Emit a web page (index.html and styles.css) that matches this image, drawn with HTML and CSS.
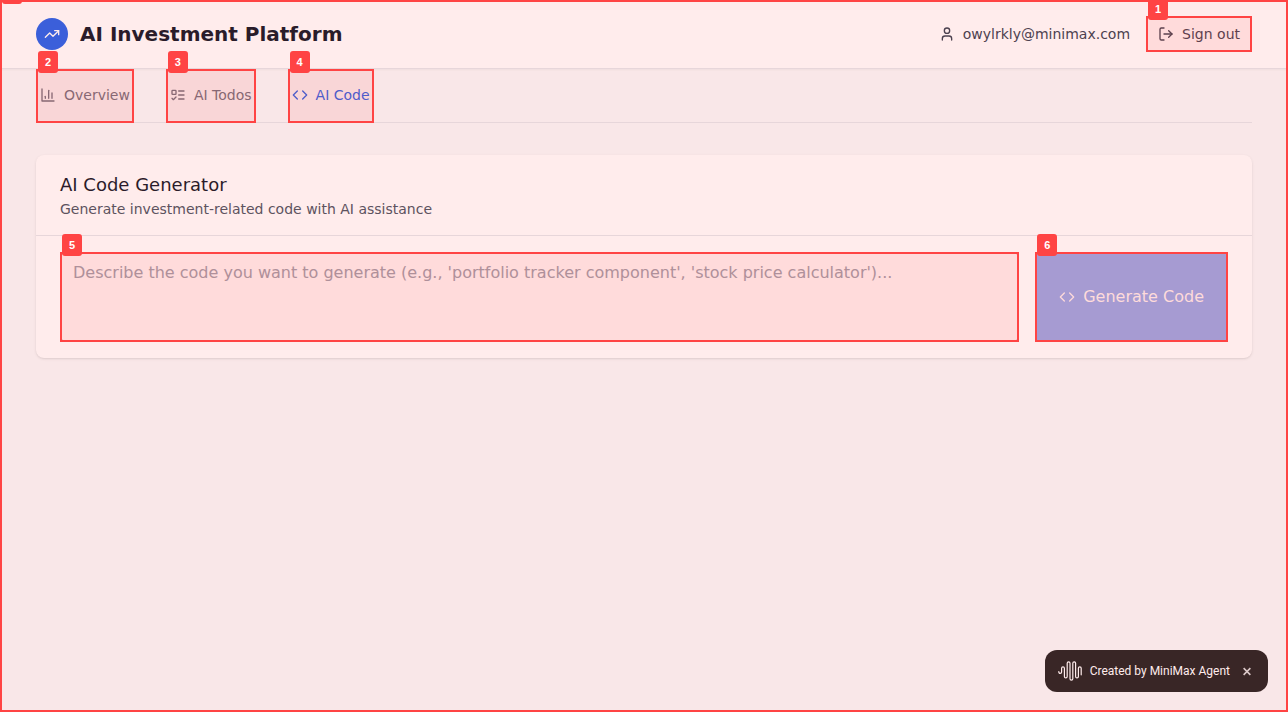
FILE: index.html
```html
<!DOCTYPE html>
<html lang="en">
<head>
<meta charset="utf-8">
<meta name="viewport" content="width=device-width, initial-scale=1">
<title>AI Investment Platform</title>
<link rel="stylesheet" href="styles.css">
</head>
<body>
<header class="topbar">
  <div class="container topbar-row">
    <div class="brand">
      <span class="brand-mark"><svg class="icon" viewBox="0 0 24 24"><path d="M22 7 13.5 15.5 8.5 10.5 2 17"/><path d="M16 7h6v6"/></svg></span>
      <h1 class="brand-name">AI Investment Platform</h1>
    </div>
    <div class="account">
      <div class="user">
        <svg class="icon" viewBox="0 0 24 24"><path d="M19 21v-2a4 4 0 0 0-4-4H9a4 4 0 0 0-4 4v2"/><circle cx="12" cy="7" r="4"/></svg>
        <span>owylrkly@minimax.com</span>
      </div>
      <div class="target">
        <button class="signout" type="button">
          <svg class="icon" viewBox="0 0 24 24"><path d="M9 21H5a2 2 0 0 1-2-2V5a2 2 0 0 1 2-2h4"/><path d="m16 17 5-5-5-5"/><path d="M21 12H9"/></svg>
          Sign out
        </button>
        <div class="marker"><span class="marker-label">1</span></div>
      </div>
    </div>
  </div>
</header>

<main class="container">
  <nav class="tabs">
    <div class="target">
      <button class="tab" type="button">
        <svg class="icon" viewBox="0 0 24 24"><path d="M3 3v18h18"/><path d="M18 17V9"/><path d="M13 17V5"/><path d="M8 17v-3"/></svg>
        Overview
      </button>
      <div class="marker"><span class="marker-label">2</span></div>
    </div>
    <div class="target">
      <button class="tab" type="button">
        <svg class="icon" viewBox="0 0 24 24"><rect x="3" y="5" width="6" height="6" rx="1"/><path d="m3 17 2 2 4-4"/><path d="M13 6h8"/><path d="M13 12h8"/><path d="M13 18h8"/></svg>
        AI Todos
      </button>
      <div class="marker"><span class="marker-label">3</span></div>
    </div>
    <div class="target">
      <button class="tab tab-active" type="button">
        <svg class="icon" viewBox="0 0 24 24"><path d="m16 18 6-6-6-6"/><path d="m8 6-6 6 6 6"/></svg>
        AI Code
      </button>
      <div class="marker"><span class="marker-label">4</span></div>
    </div>
  </nav>

  <section class="card">
    <div class="card-head">
      <h2 class="card-title">AI Code Generator</h2>
      <p class="card-subtitle">Generate investment-related code with AI assistance</p>
    </div>
    <form class="card-body">
      <div class="target target-grow">
        <textarea class="prompt" rows="3" aria-label="Code description" placeholder="Describe the code you want to generate (e.g., 'portfolio tracker component', 'stock price calculator')..."></textarea>
        <div class="marker"><span class="marker-label">5</span></div>
      </div>
      <div class="target">
        <button class="generate" type="submit" disabled>
          <svg class="icon" viewBox="0 0 24 24"><path d="m16 18 6-6-6-6"/><path d="m8 6-6 6 6 6"/></svg>
          Generate Code
        </button>
        <div class="marker"><span class="marker-label">6</span></div>
      </div>
    </form>
  </section>
</main>

<aside class="credit">
  <svg class="credit-logo" viewBox="0 0 24 20"><path d="M.8 10.5v.5a1.4 1.4 0 0 0 2.8 0V7.2a1.4 1.4 0 0 1 2.8 0v8.4a1.4 1.4 0 0 0 2.8 0V2.2a1.4 1.4 0 0 1 2.8 0v15.6a1.4 1.4 0 0 0 2.8 0V2.2a1.4 1.4 0 0 1 2.8 0v13.4a1.4 1.4 0 0 0 2.8 0V7.2a1.4 1.4 0 0 1 2.8 0v6.6"/></svg>
  <span>Created by MiniMax Agent</span>
  <button class="credit-close" type="button" aria-label="Close"><svg viewBox="0 0 8 8"><path d="M1 1l6 6M7 1 1 7"/></svg></button>
</aside>

<div class="marker marker-page"><span class="marker-label"></span></div>
</body>
</html>
```
FILE: styles.css
```css
*,
*::before,
*::after {
  box-sizing: border-box;
}

body {
  margin: 0;
  min-height: 100vh;
  background: #f9fafb;
  color: #111827;
  font-family: "DejaVu Sans", sans-serif;
  font-size: 16px;
  line-height: 24px;
}

h1,
h2,
p {
  margin: 0;
}

button {
  display: flex;
  align-items: center;
  gap: 8px;
  margin: 0;
  border: 0;
  background: transparent;
  font: inherit;
  white-space: nowrap;
}

.container {
  max-width: 1280px;
  margin: 0 auto;
  padding: 0 32px;
}

.icon {
  flex: none;
  width: 16px;
  height: 16px;
  fill: none;
  stroke: currentColor;
  stroke-width: 2;
  stroke-linecap: round;
  stroke-linejoin: round;
}

/* Header */
.topbar {
  background: #fff;
  border-bottom: 1px solid #e5e7eb;
  box-shadow: 0 1px 2px rgba(0, 0, 0, 0.05);
}

.topbar-row {
  display: flex;
  align-items: center;
  justify-content: space-between;
  padding-top: 16px;
  padding-bottom: 16px;
}

.brand {
  display: flex;
  align-items: center;
  gap: 12px;
}

.brand-mark {
  display: grid;
  place-items: center;
  width: 32px;
  height: 32px;
  border-radius: 50%;
  background: #2563eb;
  color: #fff;
}

.brand-name {
  font-size: 20px;
  line-height: 28px;
  font-weight: 700;
}

.account {
  display: flex;
  align-items: center;
  gap: 16px;
  color: #374151;
  font-size: 14px;
  line-height: 20px;
}

.user {
  display: flex;
  align-items: center;
  gap: 8px;
}

.signout {
  padding: 8px 12px;
  color: #374151;
}

/* Tabs */
.tabs {
  display: flex;
  gap: 32px;
  border-bottom: 1px solid #e5e7eb;
  font-size: 14px;
  line-height: 20px;
}

.tabs .target {
  margin-bottom: -1px;
}

.tab {
  padding: 16px 4px;
  border-bottom: 2px solid transparent;
  color: #6b7280;
}

.tab-active {
  border-bottom-color: #2563eb;
  color: #2563eb;
}

/* Generator card */
.card {
  margin: 32px 0;
  border-radius: 8px;
  background: #fff;
  box-shadow: 0 1px 3px rgba(0, 0, 0, 0.1), 0 1px 2px -1px rgba(0, 0, 0, 0.1);
}

.card-head {
  padding: 16px 24px;
  border-bottom: 1px solid #e5e7eb;
}

.card-title {
  font-size: 18px;
  line-height: 28px;
  font-weight: 400;
}

.card-subtitle {
  color: #4b5563;
  font-size: 14px;
  line-height: 20px;
}

.card-body {
  display: flex;
  gap: 16px;
  padding: 16px 24px;
}

.prompt {
  display: block;
  width: 100%;
  height: 100%;
  padding: 8px 12px;
  border: 1px solid #d1d5db;
  border-radius: 6px;
  background: #fff;
  color: inherit;
  font: inherit;
  resize: none;
}

.prompt::placeholder {
  color: #9ca3af;
  opacity: 1;
}

.generate {
  height: 100%;
  padding: 8px 24px;
  background: #2563eb;
  color: #fff;
  opacity: 0.5;
}

/* Credit toast */
.credit {
  position: fixed;
  right: 20px;
  bottom: 20px;
  display: flex;
  align-items: center;
  gap: 8px;
  height: 42px;
  padding: 0 16px 0 13px;
  border-radius: 12px;
  background: #232323;
  color: #fff;
  font-family: Roboto, sans-serif;
  font-size: 12px;
  line-height: 18px;
  font-weight: 400;
}

.credit-logo {
  width: 24px;
  height: 20px;
  fill: none;
  stroke: currentColor;
  stroke-width: 1.2;
  stroke-linecap: round;
}

.credit-close {
  padding: 4px 0 4px 4px;
  color: #d8d8d8;
}

.credit-close svg {
  width: 10px;
  height: 9px;
  fill: none;
  stroke: currentColor;
  stroke-width: 1.4;
}

/* Numbered element markers */
.target {
  position: relative;
}

.target-grow {
  flex: 1;
  min-width: 0;
}

.marker {
  position: absolute;
  inset: 0;
  z-index: 20;
  border: 2px solid #f44;
  background: rgba(255, 68, 68, 0.1);
  pointer-events: none;
}

.marker-page {
  position: fixed;
  z-index: 10;
}

.marker-label {
  position: absolute;
  top: -20px;
  left: 0;
  width: 20px;
  height: 22px;
  border-radius: 3px;
  background: #f44;
  color: #fff;
  font-family: "Liberation Sans", Arial, sans-serif;
  font-size: 11px;
  line-height: 22px;
  font-weight: 700;
  text-align: center;
}
```
